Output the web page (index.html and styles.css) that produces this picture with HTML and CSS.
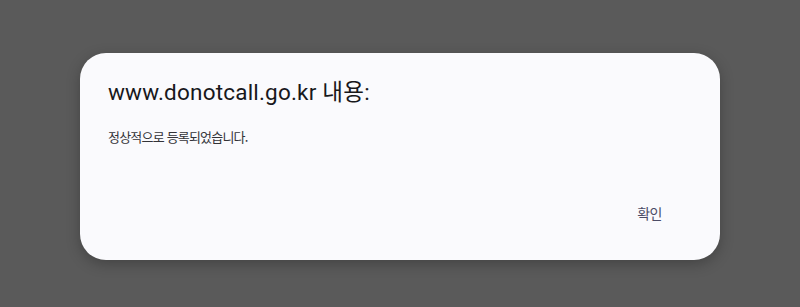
FILE: index.html
```html
<!DOCTYPE html>
<html lang="ko">
<head>
<meta charset="utf-8">
<link rel="stylesheet" href="styles.css">
</head>
<body>
<div class="screen">
  <div class="dialog">
    <h1 class="title">www.donotcall.go.kr 내용:</h1>
    <p class="message">정상적으로 등록되었습니다.</p>
    <div class="actions">
      <button class="ok">확인</button>
    </div>
  </div>
</div>
</body>
</html>
```

FILE: styles.css
```css
html, body {
  margin: 0;
  padding: 0;
  background: #5a5a5a;
}
.screen {
  width: 800px;
  height: 307px;
  display: flex;
  justify-content: center;
  align-items: flex-start;
  padding-top: 53px;
  box-sizing: border-box;
}
.dialog {
  width: 640px;
  height: 207px;
  background: #fafafd;
  border-radius: 26px;
  box-shadow: 0 4px 14px rgba(0,0,0,0.25);
  box-sizing: border-box;
  padding: 25px 28px 0 28px;
  display: flex;
  flex-direction: column;
}
.title {
  margin: 0;
  font-family: "Roboto", "Noto Sans CJK KR", sans-serif;
  font-weight: 400;
  font-size: 22.5px;
  line-height: 28px;
  color: #18181b;
  letter-spacing: 0.2px;
}
.message {
  margin: 22px 0 0 0;
  font-family: "Noto Sans CJK KR", sans-serif;
  font-size: 13px;
  line-height: 18px;
  color: #333338;
  letter-spacing: -0.8px;
}
.actions {
  margin-top: 57px;
  display: flex;
  justify-content: flex-end;
}
.ok {
  border: 0;
  background: transparent;
  padding: 0;
  margin-right: 30px;
  font-family: "Noto Sans CJK KR", sans-serif;
  font-size: 14px;
  line-height: 20px;
  color: #4c4c66;
  letter-spacing: -0.5px;
}
```
